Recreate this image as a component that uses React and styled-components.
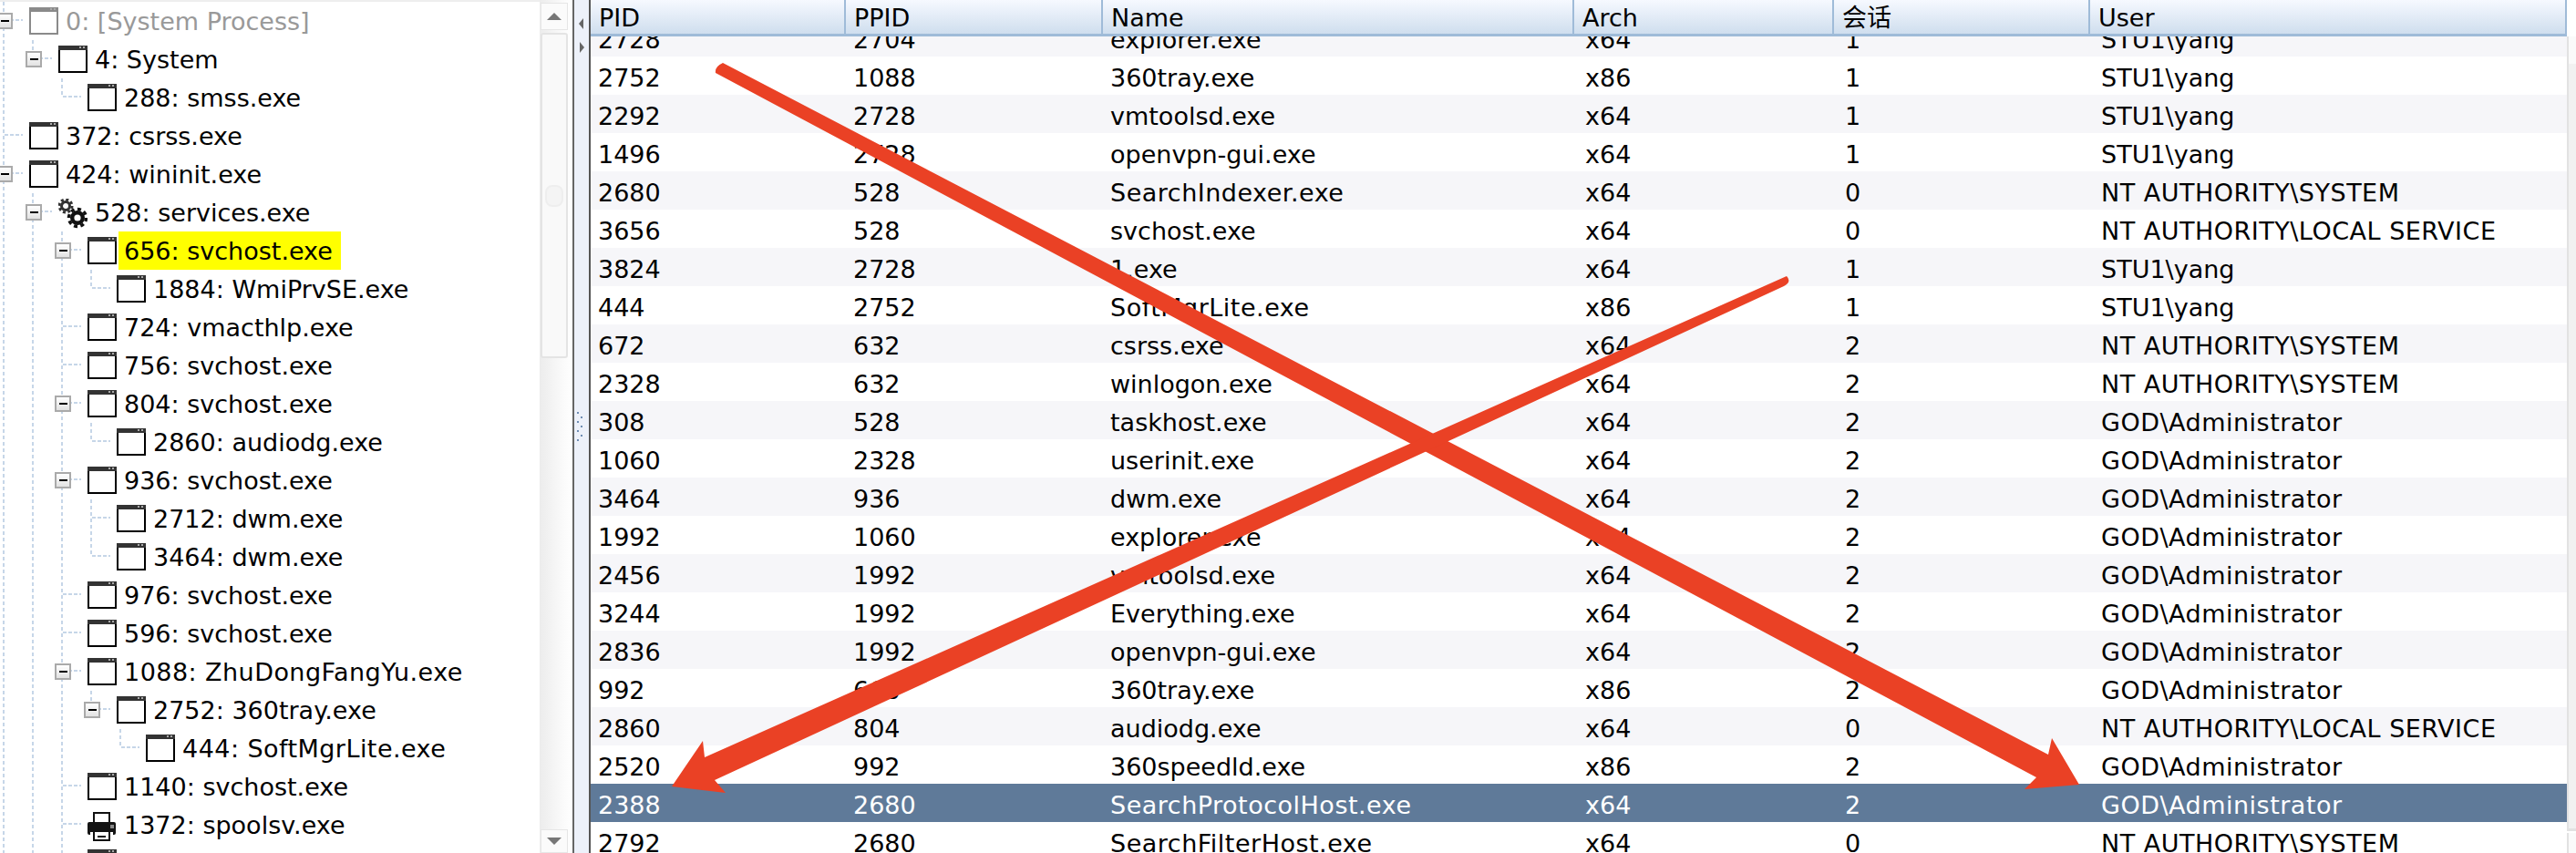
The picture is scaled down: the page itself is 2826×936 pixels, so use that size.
import React from "react";
import styled, { createGlobalStyle } from "styled-components";

const RAIL = "#c6d6e8";

const treeRows = [
  { level: 0, label: "0: [System Process]", kind: "tee", open: true, muted: true },
  { level: 1, label: "4: System", kind: "last", open: true, rails: [0] },
  { level: 2, label: "288: smss.exe", kind: "last", rails: [0] },
  { level: 0, label: "372: csrss.exe", kind: "tee" },
  { level: 0, label: "424: wininit.exe", kind: "tee", open: true },
  { level: 1, label: "528: services.exe", kind: "tee", open: true, rails: [0], icon: "gear" },
  { level: 2, label: "656: svchost.exe", kind: "tee", open: true, rails: [0, 1], hit: true },
  { level: 3, label: "1884: WmiPrvSE.exe", kind: "last", rails: [0, 1, 2] },
  { level: 2, label: "724: vmacthlp.exe", kind: "tee", rails: [0, 1] },
  { level: 2, label: "756: svchost.exe", kind: "tee", rails: [0, 1] },
  { level: 2, label: "804: svchost.exe", kind: "tee", open: true, rails: [0, 1] },
  { level: 3, label: "2860: audiodg.exe", kind: "last", rails: [0, 1, 2] },
  { level: 2, label: "936: svchost.exe", kind: "tee", open: true, rails: [0, 1] },
  { level: 3, label: "2712: dwm.exe", kind: "tee", rails: [0, 1, 2] },
  { level: 3, label: "3464: dwm.exe", kind: "last", rails: [0, 1, 2] },
  { level: 2, label: "976: svchost.exe", kind: "tee", rails: [0, 1] },
  { level: 2, label: "596: svchost.exe", kind: "tee", rails: [0, 1] },
  { level: 2, label: "1088: ZhuDongFangYu.exe", kind: "tee", open: true, rails: [0, 1], wide: true },
  { level: 3, label: "2752: 360tray.exe", kind: "last", open: true, rails: [0, 1, 2] },
  { level: 4, label: "444: SoftMgrLite.exe", kind: "last", rails: [0, 1, 2], wide: true },
  { level: 2, label: "1140: svchost.exe", kind: "tee", rails: [0, 1] },
  { level: 2, label: "1372: spoolsv.exe", kind: "tee", rails: [0, 1], icon: "printer" },
  { level: 2, label: "1400: svchost.exe", kind: "tee", rails: [0, 1] },
];

const columns = ["PID", "PPID", "Name", "Arch", "会话", "User"];

const yang = "STU1\\yang";
const system = "NT AUTHORITY\\SYSTEM";
const local = "NT AUTHORITY\\LOCAL SERVICE";
const admin = "GOD\\Administrator";

const processes = [
  ["2728", "2704", "explorer.exe", "x64", "1", yang],
  ["2752", "1088", "360tray.exe", "x86", "1", yang],
  ["2292", "2728", "vmtoolsd.exe", "x64", "1", yang],
  ["1496", "2728", "openvpn-gui.exe", "x64", "1", yang],
  ["2680", "528", "SearchIndexer.exe", "x64", "0", system],
  ["3656", "528", "svchost.exe", "x64", "0", local],
  ["3824", "2728", "1.exe", "x64", "1", yang],
  ["444", "2752", "SoftMgrLite.exe", "x86", "1", yang],
  ["672", "632", "csrss.exe", "x64", "2", system],
  ["2328", "632", "winlogon.exe", "x64", "2", system],
  ["308", "528", "taskhost.exe", "x64", "2", admin],
  ["1060", "2328", "userinit.exe", "x64", "2", admin],
  ["3464", "936", "dwm.exe", "x64", "2", admin],
  ["1992", "1060", "explorer.exe", "x64", "2", admin],
  ["2456", "1992", "vmtoolsd.exe", "x64", "2", admin],
  ["3244", "1992", "Everything.exe", "x64", "2", admin],
  ["2836", "1992", "openvpn-gui.exe", "x64", "2", admin],
  ["992", "668", "360tray.exe", "x86", "2", admin],
  ["2860", "804", "audiodg.exe", "x64", "0", local],
  ["2520", "992", "360speedld.exe", "x86", "2", admin],
  ["2388", "2680", "SearchProtocolHost.exe", "x64", "2", admin],
  ["2792", "2680", "SearchFilterHost.exe", "x64", "0", system],
];

// capitals run wider in the original font than in ours
const isWide = (value) => /[a-z][A-Z]|AUTHORITY|GOD/.test(value);

function WindowIcon({ muted }) {
  const edge = muted ? "#8a8a8a" : "#000";
  return (
    <IconSlot>
      <svg width="32" height="30" viewBox="0 0 32 30">
        <rect x="1" y="1" width="30" height="28" fill="#fff" stroke={edge} strokeWidth="2" />
        <rect x="0" y="0" width="32" height="5" fill={muted ? "#8a8a8a" : "#333"} />
        <rect x="23" y="1" width="2" height="2" fill="#aaa" />
        <rect x="27" y="1" width="2" height="2" fill="#aaa" />
      </svg>
    </IconSlot>
  );
}

function GearIcon() {
  return (
    <IconSlot>
      <svg width="32" height="33" viewBox="0 0 32 33">
        <circle cx="8" cy="8" r="7" fill="none" stroke="#333" strokeWidth="3" strokeDasharray="3 2.5" />
        <circle cx="8" cy="8" r="4.5" fill="none" stroke="#333" strokeWidth="3" />
        <circle cx="21" cy="21" r="9.5" fill="none" stroke="#111" strokeWidth="3.5" strokeDasharray="4 3.4" />
        <circle cx="21" cy="21" r="5.8" fill="none" stroke="#111" strokeWidth="4.4" />
      </svg>
    </IconSlot>
  );
}

function PrinterIcon() {
  return (
    <IconSlot>
      <svg width="32" height="33" viewBox="0 0 32 33">
        <rect x="7" y="2" width="17" height="14" fill="#fff" stroke="#111" strokeWidth="2" />
        <rect x="0" y="12" width="31" height="14" rx="2" fill="#141414" />
        <rect x="25" y="15" width="4" height="4" fill="#888" />
        <rect x="3" y="23" width="3" height="3" fill="#fff" />
        <rect x="25" y="23" width="3" height="3" fill="#fff" />
        <rect x="7" y="22" width="17" height="10" fill="#fff" stroke="#111" strokeWidth="2" />
        <rect x="11" y="27" width="9" height="2" fill="#111" />
      </svg>
    </IconSlot>
  );
}

function TreeRow({ row }) {
  const cells = [];
  for (let i = 0; i < row.level; i++) {
    cells.push(<Guide key={i} $kind={(row.rails || []).includes(i) ? "rail" : "none"} />);
  }
  return (
    <TreeLine>
      {cells}
      <Guide $kind={row.kind}>
        {row.open && (
          <Expander>
            <Minus />
          </Expander>
        )}
      </Guide>
      {row.icon === "gear" && <GearIcon />}
      {row.icon === "printer" && <PrinterIcon />}
      {!row.icon && <WindowIcon muted={row.muted} />}
      <TreeLabel $muted={row.muted} $hit={row.hit} $wide={row.wide}>
        {row.label}
      </TreeLabel>
    </TreeLine>
  );
}

export default function App() {
  return (
    <Page>
      <GlobalStyle />
      <TreePane>
        {treeRows.map((row) => (
          <TreeRow key={row.label} row={row} />
        ))}
      </TreePane>
      <TreeScroll>
        <ScrollButton>
          <ArrowUp />
        </ScrollButton>
        <ScrollThumb>
          <Grip />
        </ScrollThumb>
        <ScrollButton $bottom>
          <ArrowDown />
        </ScrollButton>
      </TreeScroll>
      <Splitter>
        <SplitArrowLeft />
        <SplitArrowRight />
        <SplitDots>
          {Array.from({ length: 7 }).map((_, i) => (
            <SplitDot key={i} $odd={i % 2 === 1} />
          ))}
        </SplitDots>
      </Splitter>
      <TablePane>
        <TableHead>
          {columns.map((name) => (
            <HeadCell key={name}>{name}</HeadCell>
          ))}
        </TableHead>
        <TableBody>
          {processes.map((p, i) => (
            <TableRow key={p[0] + p[1]} $alt={i % 2 === 0} $selected={p[0] === "2388"}>
              {p.map((value, c) => (
                <Cell key={c} $inset={c > 2 ? 12 : 8} $wide={isWide(value)}>
                  {value}
                </Cell>
              ))}
            </TableRow>
          ))}
        </TableBody>
      </TablePane>
      <TableScroll>
        <EdgeButton />
        <EdgeThumb />
        <EdgeButton $bottom />
      </TableScroll>
      <Marks viewBox="0 0 2826 936" width="2826" height="936">
        <path
          d="M785 80 Q784 73 793 69 L2247 828 L2251 810 L2281 861 L2221 866 L2234 853 L785 80 Z"
          fill="#ea4125"
        />
        <path
          d="M1960 303 Q1966 309 1957 314 L784 856 L796 870 L737 863 L771 813 L773 831 L1960 303 Z"
          fill="#ea4125"
        />
      </Marks>
    </Page>
  );
}

const GlobalStyle = createGlobalStyle`
  html, body {
    margin: 0;
    height: 936px;
    overflow: hidden;
    background: #fff;
  }
`;

const Page = styled.div`
  position: relative;
  display: flex;
  width: 2826px;
  height: 936px;
  overflow: hidden;
  background: #fff;
  color: #000;
  font-family: "DejaVu Sans", "Noto Sans CJK SC", sans-serif;
  font-size: 27px;
`;

const TreePane = styled.div`
  width: 592px;
  flex: none;
  height: 936px;
  overflow: hidden;
  box-sizing: border-box;
  border-top: 2px solid #eee;
`;

const TreeLine = styled.div`
  display: flex;
  height: 42px;
  align-items: flex-start;
  white-space: nowrap;
`;

const Guide = styled.div`
  position: relative;
  flex: none;
  width: 32px;
  height: 42px;

  &::before {
    content: "";
    display: ${(p) => (p.$kind === "none" ? "none" : "block")};
    position: absolute;
    left: 3px;
    top: 0;
    width: 2px;
    height: ${(p) => (p.$kind === "last" ? "20px" : "42px")};
    background: repeating-linear-gradient(to bottom, ${RAIL} 0 4px, transparent 4px 7px);
  }

  &::after {
    content: "";
    display: ${(p) => (p.$kind === "tee" || p.$kind === "last" ? "block" : "none")};
    position: absolute;
    left: 5px;
    top: 19px;
    width: 20px;
    height: 2px;
    background: repeating-linear-gradient(to right, ${RAIL} 0 4px, transparent 4px 6px);
  }
`;

const Expander = styled.div`
  position: absolute;
  z-index: 1;
  left: -4px;
  top: 12px;
  width: 18px;
  height: 18px;
  box-sizing: border-box;
  display: flex;
  align-items: center;
  justify-content: center;
  border: 2px solid #aaa;
  background: linear-gradient(#fff, #e2e2e2);
`;

const Minus = styled.div`
  width: 9px;
  height: 2px;
  background: #000;
`;

const IconSlot = styled.div`
  flex: none;
  width: 32px;
  height: 33px;
  margin-top: 6px;
`;

const TreeLabel = styled.div`
  height: 42px;
  line-height: 42px;
  margin-left: 2px;
  padding: 1px 9px 0 6px;
  box-sizing: border-box;
  letter-spacing: ${(p) => (p.$wide ? "0.45px" : "0")};
  background: ${(p) => (p.$hit ? "#ffff00" : "transparent")};
  color: ${(p) => (p.$muted ? "#999" : "#000")};
`;

const TreeScroll = styled.div`
  flex: none;
  width: 36px;
  height: 936px;
  box-sizing: border-box;
  padding: 3px 5px 0 1px;
  display: flex;
  flex-direction: column;
  background: linear-gradient(to right, #ececec, #fafafa 70%, #fff);
`;

const ScrollButton = styled.div`
  flex: none;
  height: ${(p) => (p.$bottom ? "26px" : "30px")};
  margin-top: ${(p) => (p.$bottom ? "517px" : "0")};
  box-sizing: border-box;
  display: flex;
  align-items: center;
  justify-content: center;
  border: 1px solid #e6e6e6;
  background: #fbfbfb;
`;

const ArrowUp = styled.div`
  width: 0;
  height: 0;
  border-left: 8px solid transparent;
  border-right: 8px solid transparent;
  border-bottom: 8px solid #777;
`;

const ArrowDown = styled(ArrowUp)`
  border-bottom: 0;
  border-top: 8px solid #777;
`;

const ScrollThumb = styled.div`
  flex: none;
  height: 357px;
  margin-top: 3px;
  box-sizing: border-box;
  border: 2px solid #e4e4e4;
  border-radius: 3px;
  background: #f9f9f9;
  display: flex;
  align-items: flex-start;
  justify-content: center;
  padding-top: 165px;
`;

const Grip = styled.div`
  width: 16px;
  height: 20px;
  border-radius: 8px;
  border: 2px solid #eee;
  background: #f4f4f4;
`;

const Splitter = styled.div`
  position: relative;
  flex: none;
  width: 20px;
  height: 936px;
  box-sizing: border-box;
  border-left: 2px solid #666;
  border-right: 2px solid #555;
  background: #edf1fa;
`;

const SplitArrowLeft = styled.div`
  position: absolute;
  left: 5px;
  top: 20px;
  width: 0;
  height: 0;
  border-top: 6px solid transparent;
  border-bottom: 6px solid transparent;
  border-right: 5px solid #666;
`;

const SplitArrowRight = styled.div`
  position: absolute;
  left: 6px;
  top: 46px;
  width: 0;
  height: 0;
  border-top: 6px solid transparent;
  border-bottom: 6px solid transparent;
  border-left: 5px solid #666;
`;

const SplitDots = styled.div`
  position: absolute;
  left: 3px;
  top: 452px;
  display: flex;
  flex-direction: column;
  gap: 3px;
`;

const SplitDot = styled.div`
  width: 2px;
  height: 2px;
  background: #6f8db3;
  margin-left: ${(p) => (p.$odd ? "4px" : "0")};
`;

const TablePane = styled.div`
  flex: none;
  width: 2168px;
  height: 936px;
  overflow: hidden;
  display: flex;
  flex-direction: column;
`;

const tableGrid = "280px 282px 517px 285px 281px 1fr";

const TableHead = styled.div`
  position: relative;
  z-index: 1;
  flex: none;
  display: grid;
  grid-template-columns: ${tableGrid};
  height: 40px;
  box-sizing: border-box;
  border-bottom: 3px solid #9fbbd8;
  background: linear-gradient(#f6f9ff, #cfdeee);
`;

const HeadCell = styled.div`
  height: 37px;
  line-height: 39px;
  box-sizing: border-box;
  padding-left: 9px;
  border-right: 2px solid #9fbbd8;
  overflow: hidden;
`;

const TableBody = styled.div`
  margin-top: -20px;
`;

const TableRow = styled.div`
  display: grid;
  grid-template-columns: ${tableGrid};
  height: 42px;
  background: ${(p) => (p.$selected ? "#5f7a99" : p.$alt ? "#f6f6f9" : "#fff")};
  color: ${(p) => (p.$selected ? "#fff" : "#000")};
`;

const Cell = styled.div`
  height: 42px;
  line-height: 42px;
  box-sizing: border-box;
  padding: 3px 0 0 ${(p) => p.$inset}px;
  white-space: nowrap;
  letter-spacing: ${(p) => (p.$wide ? "0.5px" : "0")};
`;

const TableScroll = styled.div`
  flex: none;
  width: 10px;
  height: 936px;
  box-sizing: border-box;
  padding-top: 40px;
  display: flex;
  flex-direction: column;
`;

const EdgeButton = styled.div`
  flex: none;
  height: ${(p) => (p.$bottom ? "22px" : "30px")};
  margin-top: ${(p) => (p.$bottom ? "2px" : "0")};
  box-sizing: border-box;
  border-left: 2px solid #e2e2e2;
  background: #fafafa;
`;

const EdgeThumb = styled.div`
  flex: none;
  height: 842px;
  box-sizing: border-box;
  border-left: 2px solid #e2e2e2;
  border-bottom: 3px solid #e2e2e2;
  background: #f1f1f1;
`;

const Marks = styled.svg`
  position: absolute;
  left: 0;
  top: 0;
  pointer-events: none;
`;
